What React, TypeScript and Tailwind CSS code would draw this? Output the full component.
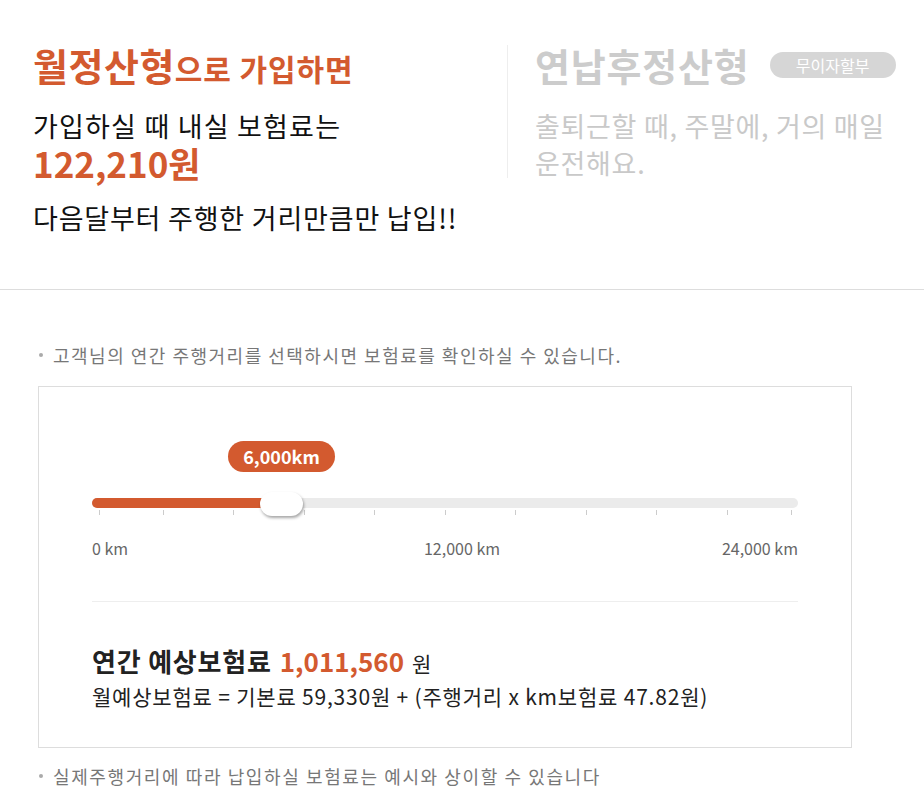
import React from "react";

const orange = "text-[#d35a2f]";

const ticks = Array.from({ length: 11 });

const App: React.FC = () => {
    return (
        <div className="w-[924px] h-[790px] bg-white overflow-hidden font-['Noto_Sans_CJK_KR','Noto_Sans',sans-serif]">
            {/* TOP: PLAN COMPARE */}
            <div className="h-[290px] border-b border-[#dddddd] flex items-start pt-[43px]">
                <div className="w-[507px] pl-[33px] flex flex-col">
                    <div className={`h-[44px] flex items-baseline font-bold ${orange}`}>
                        <span className="text-[38px] leading-[44px] tracking-[0.5px]">월정산형</span>
                        <span className="text-[30px] leading-[44px] tracking-[0.9px]">으로 가입하면</span>
                    </div>
                    <p className="mt-[20px] text-[27px] leading-[37px] tracking-[1.2px] text-[#111]">가입하실 때 내실 보험료는</p>
                    <p className={`text-[35px] leading-[37px] font-bold ${orange}`}>122,210원</p>
                    <p className="mt-[18px] text-[27px] leading-[37px] tracking-[0.8px] text-[#111]">다음달부터 주행한 거리만큼만 납입!!</p>
                </div>
                <div className="mt-[2px] h-[133px] border-l border-[#eeeeee] pl-[27px] flex flex-col">
                    <div className="h-[40px] flex items-center gap-[20px]">
                        <span className="text-[38px] leading-[40px] font-bold tracking-[0.8px] text-[#cccccc]">연납후정산형</span>
                        <span className="h-[26px] w-[126px] rounded-full bg-[#d6d6d6] text-white text-[16px] leading-[26px] text-center">무이자할부</span>
                    </div>
                    <p className="mt-[22px] text-[27px] leading-[37px] tracking-[0.7px] text-[#c9c9c9]">
                        출퇴근할 때, 주말에, 거의 매일
                        <br />
                        운전해요.
                    </p>
                </div>
            </div>

            {/* CALCULATOR */}
            <div className="pt-[53px] pl-[38px]">
                <p className="flex items-center text-[18px] leading-[24px] tracking-[1.5px] text-[#777777]">
                    <span className="h-[4px] w-[4px] rounded-full bg-[#aaaaaa] ml-[1px] mr-[10px]"></span>
                    고객님의 연간 주행거리를 선택하시면 보험료를 확인하실 수 있습니다.
                </p>
                <div className="mt-[19px] w-[814px] h-[362px] border border-[#dddddd] px-[53px] pt-[54px]">
                    {/* SLIDER */}
                    <div className="relative">
                        <div className="ml-[136px] h-[31px] w-[107px] rounded-full bg-[#d35a2f] text-white text-[18px] font-bold leading-[31px] text-center">
                            6,000km
                        </div>
                        <div className="mt-[26px] h-[10px] rounded-full bg-[#ebebeb] flex">
                            <div className="h-[10px] w-[180px] rounded-full bg-[#d35a2f]"></div>
                        </div>
                        <div className="absolute left-[168px] top-[51px] h-[24px] w-[43px] rounded-[12px] bg-white shadow-[1px_2px_3px_rgba(0,0,0,0.35)]"></div>
                        <div className="mt-[2px] h-[5px] flex justify-between">
                            {ticks.map((_, i) => (
                                <span
                                    key={i}
                                    className={`h-[5px] w-[1px] bg-[#cccccc] ${i === 0 ? "translate-x-[7px]" : ""} ${i === 10 ? "-translate-x-[6px]" : ""}`}
                                ></span>
                            ))}
                        </div>
                        <div className="mt-[22px] flex justify-between text-[16px] leading-[22px] text-[#666666]">
                            <span className="w-[120px]">0 km</span>
                            <span className="w-[120px] text-center translate-x-[17px]">12,000 km</span>
                            <span className="w-[120px] text-right">24,000 km</span>
                        </div>
                    </div>

                    {/* RESULT */}
                    <div className="mt-[42px] border-t border-[#eeeeee] pt-[43px]">
                        <p className="flex items-baseline text-[26px] leading-[32px] font-bold text-[#222222]">
                            <span className="tracking-[0.8px]">연간 예상보험료</span>
                            <span className={`ml-[8px] ${orange}`}>1,011,560</span>
                            <span className="ml-[8px] text-[21px] font-normal">원</span>
                        </p>
                        <p className="mt-[3px] text-[21px] leading-[28px] tracking-[0.8px] text-[#222222]">
                            월예상보험료 = 기본료 59,330원 + (주행거리 x km보험료 47.82원)
                        </p>
                    </div>
                </div>
                <p className="mt-[16px] flex items-center text-[18px] leading-[24px] tracking-[1.6px] text-[#777777]">
                    <span className="h-[4px] w-[4px] rounded-full bg-[#aaaaaa] ml-[1px] mr-[10px]"></span>
                    실제주행거리에 따라 납입하실 보험료는 예시와 상이할 수 있습니다
                </p>
            </div>
        </div>
    );
};

export default App;
